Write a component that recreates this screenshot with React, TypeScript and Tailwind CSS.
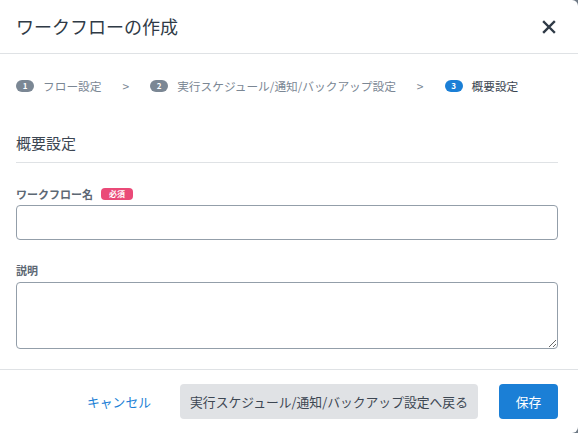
import React from "react";

const font = { fontFamily: '"Noto Sans CJK JP", "Noto Sans", sans-serif' };

function Step({ n, label, active }: { n: number; label: string; active?: boolean }) {
  return (
    <div className="flex items-center gap-[9px]">
      <span
        className={`flex h-[12px] w-[18px] items-center justify-center rounded-full text-[8px] font-bold leading-none text-white ${
          active ? "bg-[#1b7fd6]" : "bg-[#7b8794]"
        }`}
      >
        {n}
      </span>
      <span className={`text-[11.7px] leading-none ${active ? "text-[#3c4652]" : "text-[#7b8794]"}`}>{label}</span>
    </div>
  );
}

export default function App() {
  return (
    <div className="h-[433px] w-[578px] bg-[#6e7985]" style={font}>
      <div className="flex h-[433px] w-[578px] flex-col rounded-r-[6px] bg-white">
        <div className="flex h-[54px] items-center justify-between border-b border-[#dfe2e5] pl-[16px] pr-[22px]">
          <h1 className="text-[18px] font-normal text-[#2f3a46]">ワークフローの作成</h1>
          <svg width="14" height="14" viewBox="0 0 14 14">
            <path d="M2 2 L12 12 M12 2 L2 12" stroke="#2f3a46" strokeWidth="2.4" strokeLinecap="square" />
          </svg>
        </div>
        <div className="flex items-center pl-[16px] pt-[23px] pb-[3px]">
          <Step n={1} label="フロー設定" />
          <span className="mx-[21px] text-[12px] text-[#7b8794]">&gt;</span>
          <Step n={2} label="実行スケジュール/通知/バックアップ設定" />
          <span className="mx-[21px] text-[12px] text-[#7b8794]">&gt;</span>
          <Step n={3} label="概要設定" active />
        </div>
        <div className="pl-[16px] pr-[20px]">
          <h2 className="mt-[34px] border-b border-[#dfe2e5] pb-[7px] text-[15px] font-normal text-[#3c4652]">概要設定</h2>
          <div className="mt-[23px] flex items-center gap-[8px]">
            <span className="text-[11px] font-bold text-[#5d6874]">ワークフロー名</span>
            <span className="flex h-[12px] w-[32px] items-center justify-center rounded-[4px] bg-[#ea4a78] text-[8px] font-bold leading-none text-white">
              必須
            </span>
          </div>
          <input className="mt-[3px] block h-[35px] w-full rounded-[4px] border border-[#939ea9] bg-white" />
          <div className="mt-[22px] text-[11px] font-bold text-[#5d6874]">説明</div>
          <textarea className="mt-[3px] block h-[67px] w-full resize-y rounded-[4px] border border-[#939ea9] bg-white" />
        </div>
        <div className="mt-[20px] flex flex-1 items-center justify-end border-t border-[#dfe2e5] pr-[20px]">
          <button className="mr-[29px] text-[12.8px] text-[#1b7fd6]">キャンセル</button>
          <button className="mr-[21px] h-[35px] w-[298px] rounded-[4px] bg-[#e0e2e5] text-[12.8px] text-[#3c4652]">
            実行スケジュール/通知/バックアップ設定へ戻る
          </button>
          <button className="h-[35px] w-[59px] rounded-[4px] bg-[#1b7fd6] text-[12.8px] text-white">保存</button>
        </div>
      </div>
    </div>
  );
}
